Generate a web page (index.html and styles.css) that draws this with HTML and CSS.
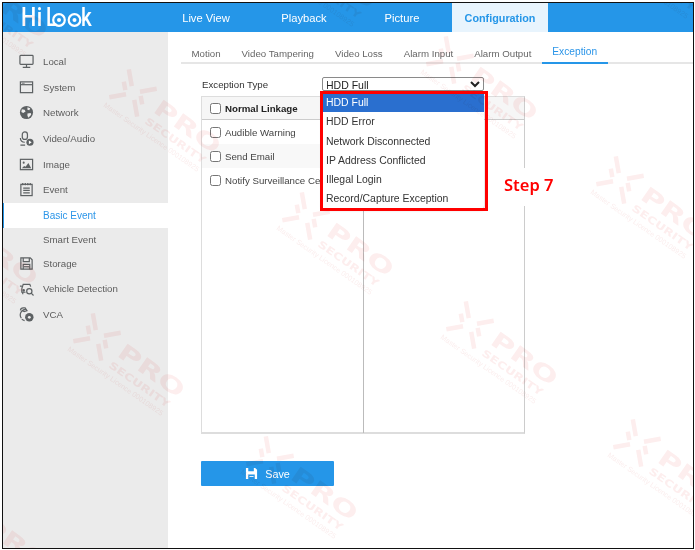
FILE: index.html
```html
<!DOCTYPE html>
<html lang="en">
<head>
<meta charset="utf-8">
<title>Exception configuration</title>
<link rel="stylesheet" href="styles.css">
</head>
<body>
<div class="frame">
  <header class="topbar">
    <div class="logo"><span class="logo-hi">Hi</span><span class="logo-l">L</span><svg class="logo-eyes" viewBox="0 0 32 14" width="32" height="14"><g fill="none" stroke="#fff" stroke-width="2.200"><circle cx="8" cy="7" r="5.800"/><circle cx="23.500" cy="7" r="5.800"/></g><circle cx="8" cy="7" r="2" fill="#fff"/><circle cx="23.500" cy="7" r="2" fill="#fff"/></svg><span class="logo-k">k</span></div>
    <nav class="topnav">
      <a class="topnav-item">Live View</a>
      <a class="topnav-item">Playback</a>
      <a class="topnav-item">Picture</a>
      <a class="topnav-item topnav-active">Configuration</a>
    </nav>
  </header>
  <div class="body">
    <aside class="sidebar">
      <div class="side-item">
        <svg class="side-icon" viewBox="0 0 16 16"><rect x="1" y="1.500" width="14" height="9.500" rx=".8"/><path d="M8 11v3M4 14.200h8"/></svg>
        <span>Local</span>
      </div>
      <div class="side-item">
        <svg class="side-icon" viewBox="0 0 16 16"><rect x="1.500" y="2" width="13" height="11.500"/><path d="M1.500 5h13"/><path d="M3 3.500h3" stroke-width=".8"/></svg>
        <span>System</span>
      </div>
      <div class="side-item">
        <svg class="side-icon" viewBox="0 0 16 16"><circle cx="8" cy="8" r="7" fill="#5d6163" stroke="none"/><path d="M3 4.500l3 .5 1 2-2.500 1.500-2-1zM9 2.500l3 1-1 2-2-.5zM9 9l3.500-.5.500 2-3 3-1-2z" fill="#eee" stroke="none"/></svg>
        <span>Network</span>
      </div>
      <div class="side-item">
        <svg class="side-icon" viewBox="0 0 16 16"><rect x="3.500" y="1" width="5.500" height="8" rx="2.700"/><path d="M1.500 7.500c0 3 2 4.500 4.700 4.500M1.500 15h5"/><circle cx="11.700" cy="12" r="3.800" fill="#5d6163" stroke="none"/><path d="M10.500 10l3 2-3 2z" fill="#fff" stroke="none"/></svg>
        <span>Video/Audio</span>
      </div>
      <div class="side-item">
        <svg class="side-icon" viewBox="0 0 16 16"><rect x="1.500" y="2.500" width="13" height="11"/><circle cx="5" cy="6" r="1.100" fill="#5d6163" stroke="none"/><path d="M3 12l2.500-2.500 1.500 1 3-4 3 5.500z" fill="#5d6163" stroke="none"/></svg>
        <span>Image</span>
      </div>
      <div class="side-item">
        <svg class="side-icon" viewBox="0 0 16 16"><rect x="2" y="2.500" width="12" height="12"/><path d="M4 1v2.500M6.700 1v2.500M9.400 1v2.500M12 1v2.500M4.500 6.500h7M4.500 9h7M4.500 11.500h7"/></svg>
        <span>Event</span>
      </div>
      <div class="side-item side-sub side-selected"><span>Basic Event</span></div>
      <div class="side-item side-sub side-smart"><span>Smart Event</span></div>
      <div class="side-item">
        <svg class="side-icon" viewBox="0 0 16 16"><path d="M2 2h10l2 2v10H2z"/><path d="M4.500 2v4h6.500V2M4.500 14v-5h7v5" /><path d="M5 11.500h6" /></svg>
        <span>Storage</span>
      </div>
      <div class="side-item">
        <svg class="side-icon" viewBox="0 0 16 16"><path d="M3 8l1.500-4.500h7L12.500 6M1 5.500h2M3 8v4h4M4 12v2"/><circle cx="11" cy="11" r="2.800"/><path d="M13 13l2.500 2.500"/><circle cx="5" cy="10" r=".7" fill="#5d6163"/></svg>
        <span>Vehicle Detection</span>
      </div>
      <div class="side-item">
        <svg class="side-icon" viewBox="0 0 16 16"><path d="M7 2.500a6 6 0 0 0-4.500 9.500M1.500 3.500a3 3 0 0 1 3-2.500h2l2 3-3 1-1.500-1"/><path d="M3 13a5 5 0 0 0 3 1.500"/><circle cx="11" cy="11" r="4.500" fill="#5d6163" stroke="none"/><circle cx="11" cy="11" r="1.500" fill="#eee" stroke="none"/></svg>
        <span>VCA</span>
      </div>
    </aside>
    <main class="main">
      <div class="tabs">
        <a class="tab">Motion</a>
        <a class="tab">Video Tampering</a>
        <a class="tab">Video Loss</a>
        <a class="tab">Alarm Input</a>
        <a class="tab">Alarm Output</a>
        <a class="tab tab-active">Exception</a>
      </div>
      <div class="content">
        <div class="type-row">
          <label class="type-label" for="ex">Exception Type</label>
          <div class="select-wrap">
            <select class="type-select" id="ex"><option>HDD Full</option></select>
            <ul class="dropdown">
              <li class="option option-selected">HDD Full</li>
              <li class="option">HDD Error</li>
              <li class="option">Network Disconnected</li>
              <li class="option">IP Address Conflicted</li>
              <li class="option">Illegal Login</li>
              <li class="option">Record/Capture Exception</li>
            </ul>
            <div class="annotation-box"></div>
          </div>
        </div>
        <div class="linkage">
          <div class="linkage-head"><input type="checkbox" class="check"><b>Normal Linkage</b></div>
          <div class="linkage-cols">
            <div class="linkage-left">
              <div class="linkage-row"><input type="checkbox" class="check"><span>Audible Warning</span></div>
              <div class="linkage-row linkage-alt"><input type="checkbox" class="check"><span>Send Email</span></div>
              <div class="linkage-row"><input type="checkbox" class="check"><span>Notify Surveillance Center</span></div>
            </div>
            <div class="linkage-right"></div>
          </div>
          <div class="step-label">Step 7</div>
        </div>
        <button class="save" type="button">
          <svg viewBox="0 0 14 14" width="13" height="13"><path d="M1 1h10l2 2v10H1z" fill="#fff"/><path d="M3.500 1h6v3.500h-6zM3.500 8h7v5h-7z" fill="#2596e8"/><path d="M4.800 9.800h4.400v1H4.800z" fill="#fff"/></svg>
          <span>Save</span>
        </button>
      </div>
    </main>
  </div>
  <svg class="watermarks" viewBox="0 0 692 547" aria-hidden="true">
    <defs>
      <g id="xmark"><path d="M-17 -17L-5 -5M17 17L5 5M-17 17L-5 5M17 -17L5 -5M-14 -4L-8 2M14 4L8 -2"/></g>
    </defs>
    <g transform="translate(-43 -25) rotate(35)"><use href="#xmark" class="wm-x"/><text class="wm-pro" x="26" y="4" textLength="76" lengthAdjust="spacingAndGlyphs">PRO</text><text class="wm-sec" x="26" y="18" textLength="72" lengthAdjust="spacingAndGlyphs">SECURITY</text><text class="wm-lic" x="-17" y="28">Master Security Licence 000108925</text></g>
    <g transform="translate(285 -55) rotate(35)"><use href="#xmark" class="wm-x"/><text class="wm-pro" x="26" y="4" textLength="76" lengthAdjust="spacingAndGlyphs">PRO</text><text class="wm-sec" x="26" y="18" textLength="72" lengthAdjust="spacingAndGlyphs">SECURITY</text><text class="wm-lic" x="-17" y="28">Master Security Licence 000108925</text></g>
    <g transform="translate(619 -63) rotate(35)"><use href="#xmark" class="wm-x"/><text class="wm-pro" x="26" y="4" textLength="76" lengthAdjust="spacingAndGlyphs">PRO</text><text class="wm-sec" x="26" y="18" textLength="72" lengthAdjust="spacingAndGlyphs">SECURITY</text><text class="wm-lic" x="-17" y="28">Master Security Licence 000108925</text></g>
    <g transform="translate(130 90) rotate(35)"><use href="#xmark" class="wm-x"/><text class="wm-pro" x="26" y="4" textLength="76" lengthAdjust="spacingAndGlyphs">PRO</text><text class="wm-sec" x="26" y="18" textLength="72" lengthAdjust="spacingAndGlyphs">SECURITY</text><text class="wm-lic" x="-17" y="28">Master Security Licence 000108925</text></g>
    <g transform="translate(447 57) rotate(35)"><use href="#xmark" class="wm-x"/><text class="wm-pro" x="26" y="4" textLength="76" lengthAdjust="spacingAndGlyphs">PRO</text><text class="wm-sec" x="26" y="18" textLength="72" lengthAdjust="spacingAndGlyphs">SECURITY</text><text class="wm-lic" x="-17" y="28">Master Security Licence 000108925</text></g>
    <g transform="translate(617 177) rotate(35)"><use href="#xmark" class="wm-x"/><text class="wm-pro" x="26" y="4" textLength="76" lengthAdjust="spacingAndGlyphs">PRO</text><text class="wm-sec" x="26" y="18" textLength="72" lengthAdjust="spacingAndGlyphs">SECURITY</text><text class="wm-lic" x="-17" y="28">Master Security Licence 000108925</text></g>
    <g transform="translate(303 213) rotate(35)"><use href="#xmark" class="wm-x"/><text class="wm-pro" x="26" y="4" textLength="76" lengthAdjust="spacingAndGlyphs">PRO</text><text class="wm-sec" x="26" y="18" textLength="72" lengthAdjust="spacingAndGlyphs">SECURITY</text><text class="wm-lic" x="-17" y="28">Master Security Licence 000108925</text></g>
    <g transform="translate(-53 222) rotate(35)"><use href="#xmark" class="wm-x"/><text class="wm-pro" x="26" y="4" textLength="76" lengthAdjust="spacingAndGlyphs">PRO</text><text class="wm-sec" x="26" y="18" textLength="72" lengthAdjust="spacingAndGlyphs">SECURITY</text><text class="wm-lic" x="-17" y="28">Master Security Licence 000108925</text></g>
    <g transform="translate(467 322) rotate(35)"><use href="#xmark" class="wm-x"/><text class="wm-pro" x="26" y="4" textLength="76" lengthAdjust="spacingAndGlyphs">PRO</text><text class="wm-sec" x="26" y="18" textLength="72" lengthAdjust="spacingAndGlyphs">SECURITY</text><text class="wm-lic" x="-17" y="28">Master Security Licence 000108925</text></g>
    <g transform="translate(94 334) rotate(35)"><use href="#xmark" class="wm-x"/><text class="wm-pro" x="26" y="4" textLength="76" lengthAdjust="spacingAndGlyphs">PRO</text><text class="wm-sec" x="26" y="18" textLength="72" lengthAdjust="spacingAndGlyphs">SECURITY</text><text class="wm-lic" x="-17" y="28">Master Security Licence 000108925</text></g>
    <g transform="translate(634 440) rotate(35)"><use href="#xmark" class="wm-x"/><text class="wm-pro" x="26" y="4" textLength="76" lengthAdjust="spacingAndGlyphs">PRO</text><text class="wm-sec" x="26" y="18" textLength="72" lengthAdjust="spacingAndGlyphs">SECURITY</text><text class="wm-lic" x="-17" y="28">Master Security Licence 000108925</text></g>
    <g transform="translate(267 457) rotate(35)"><use href="#xmark" class="wm-x"/><text class="wm-pro" x="26" y="4" textLength="76" lengthAdjust="spacingAndGlyphs">PRO</text><text class="wm-sec" x="26" y="18" textLength="72" lengthAdjust="spacingAndGlyphs">SECURITY</text><text class="wm-lic" x="-17" y="28">Master Security Licence 000108925</text></g>
    <g transform="translate(-41 507) rotate(35)"><use href="#xmark" class="wm-x"/><text class="wm-pro" x="26" y="4" textLength="76" lengthAdjust="spacingAndGlyphs">PRO</text><text class="wm-sec" x="26" y="18" textLength="72" lengthAdjust="spacingAndGlyphs">SECURITY</text><text class="wm-lic" x="-17" y="28">Master Security Licence 000108925</text></g>
  </svg>
</div>
</body>
</html>
```

FILE: styles.css
```css
* { box-sizing: border-box; }
html, body { margin: 0; padding: 0; background: #fff; }
body { padding: 2px 0 0 2px; font-family: "Liberation Sans", Arial, sans-serif; font-size: 9.700px; color: #444; }

.frame {
  position: relative;
  width: 692px;
  height: 547px;
  border: 1px solid #111;
  display: flex;
  flex-direction: column;
  overflow: hidden;
  background: #fff;
}

.topbar { display: flex; height: 29px; flex: none; background: #2596e8; color: #fff; }
.logo {
  width: 154px;
  padding-left: 18px;
  display: flex;
  align-items: center;
  height: 29px;
  font-family: Roboto, "Liberation Sans", sans-serif;
  font-size: 25px;
  line-height: 29px;
  font-weight: 500;
  color: #fff;
}
.logo-hi { letter-spacing: 0.500px; transform: scaleX(.86); transform-origin: left center; width: 22px; }
.logo-l { transform: scaleX(.8); transform-origin: left center; width: 8px; margin-left: 3px; }
.logo-eyes { flex: none; align-self: flex-end; margin-bottom: 5px; margin-left: -3px; }
.logo-k { transform: scaleX(.82); transform-origin: left center; margin-left: -2px; }
.topnav { display: flex; }
.topnav-item { width: 98px; display: flex; align-items: center; justify-content: center; font-size: 11.200px; color: #fff; }
.topnav-active { background: #e8f4fd; color: #2596e8; font-weight: 700; margin: 0 0 0 1px; width: 96px; font-size: 10.800px; }

.body { display: flex; flex: 1; min-height: 0; }

.sidebar { width: 165px; flex: none; background: #ebebeb; padding-top: 17px; }
.side-item { display: flex; align-items: center; height: 25.600px; padding-left: 16px; color: #5c5c5c; }
.side-icon { width: 15px; height: 15px; flex: none; margin-right: 9px; fill: none; stroke: #5d6163; stroke-width: 1.300; }
.side-sub { padding-left: 40px; }
.side-selected { height: 25px; background: #fff; color: #2b95e8; border-left: 1px solid #2596e8; padding-left: 39px; font-size: 10px; }
.side-smart { height: 23px; }

.main { flex: 1; min-width: 0; padding-left: 13px; }

.tabs { display: flex; height: 32px; border-bottom: 2px solid #e6e6e6; }
.tab { padding: 16px 10.500px 0; color: #666; white-space: nowrap; }
.tab-active { color: #2b95e8; padding-top: 14px; height: 32px; border-bottom: 2px solid #2596e8; font-size: 10.200px; }

.content { padding: 13px 0 0 20px; }

.type-row { display: flex; align-items: flex-start; height: 19px; }
.type-label { width: 121px; padding-left: 1px; color: #333; line-height: 15px; }
.select-wrap { position: relative; width: 162px; }
.type-select {
  display: block;
  width: 162px;
  height: 14px;
  padding: 0;
  text-indent: -1px;
  font: 10.500px "Liberation Sans", Arial, sans-serif;
  color: #222;
  background: #fff;
  border: 1px solid #8a8a8a;
  border-radius: 2px;
}
.dropdown {
  position: absolute;
  z-index: 3;
  top: 16px;
  left: 0;
  width: 162px;
  margin: 0;
  padding: 0;
  list-style: none;
  background: #fff;
  border-radius: 0 0 4px 4px;
  overflow: hidden;
  box-shadow: 0 1px 3px rgba(0, 0, 0, .25);
  font-size: 10.450px;
  color: #333;
}
.option { height: 19.300px; line-height: 19.300px; padding-left: 4px; white-space: nowrap; }
.option-selected { background: #2a6fcf; color: #fff; }
.annotation-box {
  position: absolute;
  z-index: 4;
  top: 14px;
  left: -2.500px;
  width: 168px;
  height: 120px;
  border: 3.500px solid #f00;
}

.linkage { position: relative; width: 324px; height: 338px; border: 1px solid #ddd; border-bottom-width: 2px; border-right-color: #ccc; }
.linkage-head { display: flex; align-items: center; height: 23px; padding-left: 8px; background: #f6f6f6; border-bottom: 1px solid #ccc; color: #222; }
.linkage-cols { display: flex; height: 313px; }
.linkage-left { width: 162px; flex: none; overflow: hidden; border-right: 1px solid #bbb; white-space: nowrap; }
.linkage-right { flex: 1; }
.linkage-row { display: flex; align-items: center; height: 24px; padding-left: 8px; color: #444; }
.linkage-alt { background: #f8f8f8; }
.check { width: 11px; height: 11px; flex: none; margin: 0 4px 0 0; }
.linkage-head b { font-weight: 700; }

.step-label {
  position: absolute;
  z-index: 2;
  top: 71px;
  left: 290px;
  width: 70px;
  height: 38px;
  padding-left: 12px;
  background: #fff;
  color: #f00;
  font: 600 16.500px/34px "Noto Sans", sans-serif;
  white-space: nowrap;
}

.save {
  display: flex;
  align-items: center;
  justify-content: center;
  gap: 7px;
  width: 133px;
  height: 25px;
  margin-top: 27px;
  border: 0;
  border-radius: 1px;
  background: #2596e8;
  color: #fff;
  font: 10.800px "Liberation Sans", Arial, sans-serif;
}

.watermarks { position: absolute; inset: 0; width: 692px; height: 547px; pointer-events: none; z-index: 5; mix-blend-mode: multiply; }
.wm-x { fill: none; stroke: #fdeeee; stroke-width: 4.500; }
.wm-pro { font: 700 22px "DejaVu Sans", sans-serif; fill: #fdeeee; }
.wm-sec { font: 700 10px "DejaVu Sans", sans-serif; fill: #fdeeee; }
.wm-lic { font: 7.200px "Liberation Sans", sans-serif; fill: #fbeeee; }
```
